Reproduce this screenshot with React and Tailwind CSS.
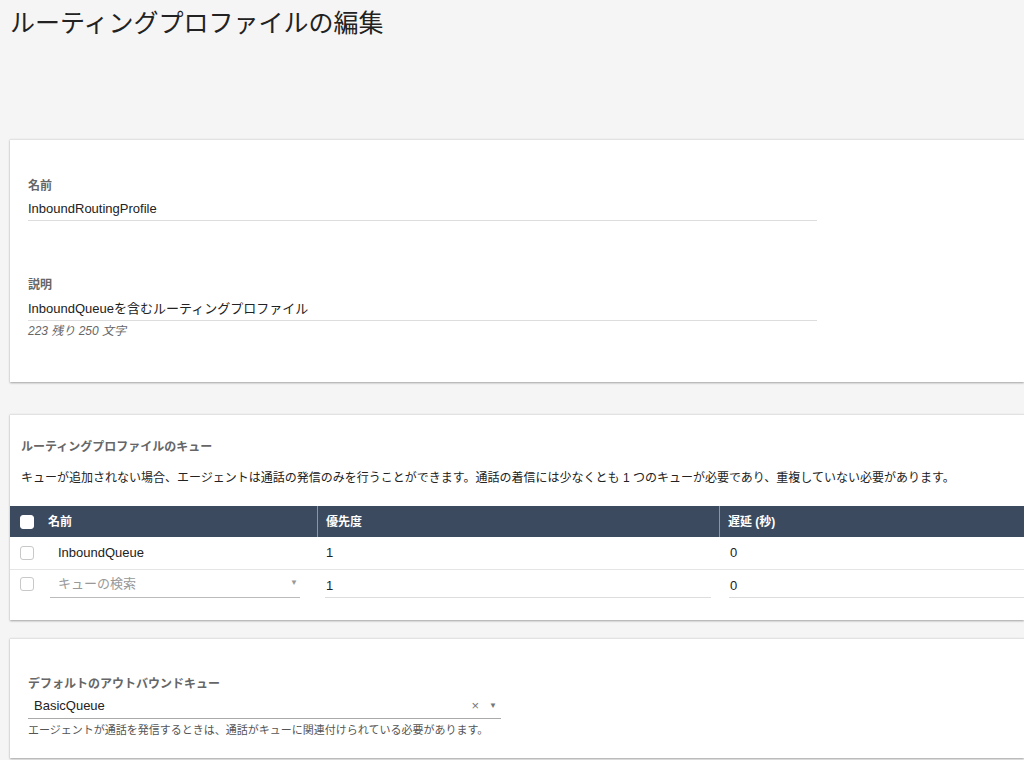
import React from 'react';

const f = { fontFamily: '"Liberation Sans", "Noto Sans CJK JP", sans-serif' };

const Box = ({ dark }) => (
  <span className={`inline-block w-[14px] h-[14px] rounded-[3px] border ${dark ? 'bg-white border-white' : 'bg-white border-[#c8c8c8]'}`} />
);

export default function App() {
  return (
    <div style={f} className="min-h-[760px] bg-[#f5f5f5] text-[#333] overflow-hidden">
      <h1 className="pl-[10px] pt-[6px] text-[25px] leading-[34px] text-[#222] h-[139px]">ルーティングプロファイルの編集</h1>

      <div className="ml-[10px] bg-white border-t border-[#e2e2e2] shadow-[0_1px_2px_rgba(0,0,0,0.35)] h-[243px] pl-[18px] pt-[38px]">
        <div className="text-[12px] font-bold text-[#666] leading-[16px]">名前</div>
        <div className="w-[789px] border-b border-[#ddd] text-[13px] leading-[18px] pt-[6px] pb-[2px] text-[#222]">InboundRoutingProfile</div>
        <div className="text-[12px] font-bold text-[#666] leading-[16px] mt-[56px]">説明</div>
        <div className="w-[789px] border-b border-[#ddd] text-[13px] leading-[18px] pt-[7px] pb-[2px] text-[#222]">InboundQueueを含むルーティングプロファイル</div>
        <div className="text-[12px] italic text-[#666] leading-[16px] mt-[2px]">223 残り 250 文字</div>
      </div>

      <div className="ml-[10px] mt-[32px] bg-white border-t border-[#e2e2e2] shadow-[0_1px_2px_rgba(0,0,0,0.35)] pt-[24px] pb-[22px]">
        <div className="pl-[11px] text-[12px] font-bold text-[#666] leading-[16px]">ルーティングプロファイルのキュー</div>
        <div className="pl-[11px] mt-[15px] text-[12px] leading-[16px] text-[#222]">キューが追加されない場合、エージェントは通話の発信のみを行うことができます。通話の着信には少なくとも 1 つのキューが必要であり、重複していない必要があります。</div>
        <div className="mt-[20px] flex h-[31px] bg-[#3b4a5f] text-white text-[12px] font-bold items-center">
          <div className="w-[308px] flex items-center pl-[10px] gap-[14px] h-full border-r border-[#8796a8]"><Box dark />名前</div>
          <div className="w-[402px] pl-[8px] h-full flex items-center border-r border-[#8796a8]">優先度</div>
          <div className="flex-1 pl-[8px]">遅延 (秒)</div>
        </div>
        <div className="flex h-[33px] items-center text-[13px] text-[#222] border-b border-[#e5e5e5]">
          <div className="w-[308px] flex items-center pl-[10px] gap-[24px]"><Box />InboundQueue</div>
          <div className="w-[402px] pl-[8px]">1</div>
          <div className="flex-1 pl-[10px]">0</div>
        </div>
        <div className="flex h-[28px] items-center text-[13px] text-[#222]">
          <div className="w-[308px] flex items-center pl-[10px] gap-[16px]">
            <Box />
            <div className="w-[250px] flex justify-between border-b border-[#bbb] pl-[8px] pr-[2px] pt-[4px] pb-[4px] text-[#999]">キューの検索<span className="text-[8px] leading-[18px]">▼</span></div>
          </div>
          <div className="w-[402px] pl-[7px] pr-[9px]"><div className="border-b border-[#ddd] pt-[6px] pb-[2px] pl-[1px]">1</div></div>
          <div className="flex-1 pl-[9px]"><div className="border-b border-[#ddd] pt-[6px] pb-[2px] pl-[1px]">0</div></div>
        </div>
      </div>

      <div className="ml-[10px] mt-[18px] bg-white border-t border-[#e2e2e2] shadow-[0_1px_2px_rgba(0,0,0,0.35)] pl-[18px] pt-[37px] pb-[20px]">
        <div className="text-[12px] font-bold text-[#666] leading-[16px]">デフォルトのアウトバウンドキュー</div>
        <div className="w-[473px] flex justify-between items-center border-b border-[#aaa] pl-[6px] pt-[5px] pb-[3px] text-[13px] leading-[18px] text-[#222]">
          BasicQueue
          <span className="flex gap-[10px] items-center text-[#777] pr-[4px]"><span className="text-[13px]">×</span><span className="text-[8px]">▼</span></span>
        </div>
        <div className="text-[11px] text-[#555] leading-[16px] mt-[3px]">エージェントが通話を発信するときは、通話がキューに関連付けられている必要があります。</div>
      </div>
    </div>
  );
}
